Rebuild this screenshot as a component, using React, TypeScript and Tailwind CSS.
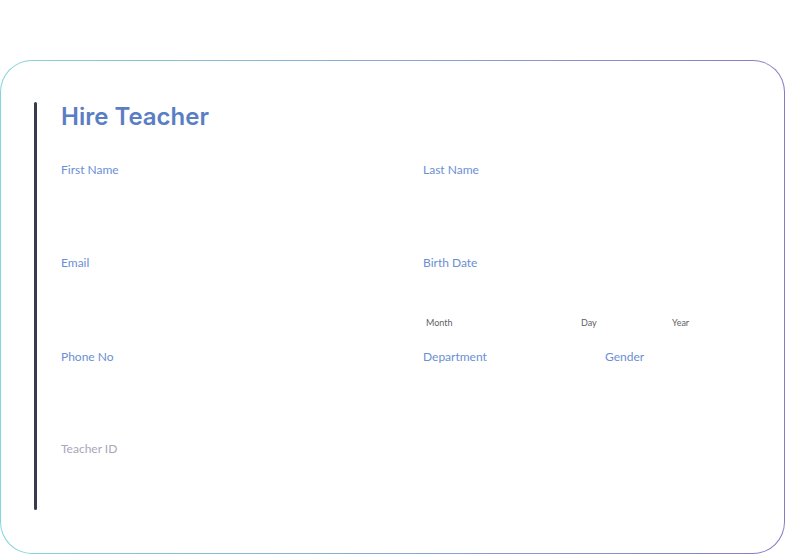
export default function App() {
  return (
    <div className="min-h-[554px] bg-white pt-[60px] pr-px" style={{ fontFamily: "Lato, 'Open Sans', sans-serif" }}>
      <div className="h-[494px] rounded-[32px] bg-gradient-to-r from-[#86d4dc] to-[#857cc4] p-px">
        <div className="flex h-full rounded-[31px] bg-white pl-[33px] pt-[41px]">
          <div className="h-[408px] w-[3px] rounded-full bg-[#383b4d]" />

          <div className="ml-[24px] flex-1">
            <h1
              className="-mt-[1px] text-[24px] leading-[32px] font-semibold text-[#5a7ec4]"
              style={{ fontFamily: "Inter, 'Liberation Sans', sans-serif" }}
            >
              Hire Teacher
            </h1>

            <div className="mt-[29px] grid grid-cols-[362px_1fr]">
              <Field label="First Name" h="h-[93px]" />
              <Field label="Last Name" h="h-[93px]" />

              <Field label="Email" h="h-[94px]" />
              <div className="h-[94px]">
                <Label text="Birth Date" />
                <div className="mt-[46px] grid grid-cols-[155px_91px_1fr] pl-[3px] text-[9px] leading-[12px] text-[#5f5f66]">
                  <span>Month</span>
                  <span>Day</span>
                  <span>Year</span>
                </div>
              </div>

              <Field label="Phone No" h="h-[92px]" />
              <div className="grid h-[92px] grid-cols-[182px_1fr]">
                <Label text="Department" />
                <Label text="Gender" />
              </div>

              <div className="h-[60px]">
                <span className="block text-[12px] leading-[16px] text-[#a9a7b8]">Teacher ID</span>
              </div>
            </div>
          </div>
        </div>
      </div>
    </div>
  )
}

function Label({ text }: { text: string }) {
  return <span className="block text-[12px] leading-[16px] text-[#6b8fd3]">{text}</span>
}

function Field({ label, h }: { label: string; h: string }) {
  return (
    <div className={h}>
      <Label text={label} />
    </div>
  )
}
